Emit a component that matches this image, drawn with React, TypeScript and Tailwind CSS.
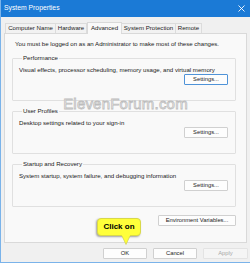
import { ReactNode } from "react";

function Btn({ children, className = "" }: { children: ReactNode; className?: string }) {
    return (
        <button
            type="button"
            className={`flex items-center justify-center h-[11px] border rounded-[1px] text-[5.8px] leading-none ${className}`}
        >
            {children}
        </button>
    );
}

function Group({ title, desc, focused }: { title: string; desc: string; focused?: boolean }) {
    return (
        <fieldset className="h-[47px] border border-[#e0e0e0] rounded-[1px] pl-[6px] pr-[7px] pb-[5px] flex flex-col">
            <legend className="ml-[3px] px-[1px] leading-[8px] text-[6.1px] text-[#1a1a1a]">{title}</legend>
            <p className="mt-[4px] leading-[8px] text-[6.1px] text-[#1a1a1a]">{desc}</p>
            <div className="mt-auto flex justify-end">
                <Btn
                    className={`w-[44px] bg-[#fdfdfd] text-[#1a1a1a] ${
                        focused ? "border-[#4f93d8]" : "border-[#d0d0d0]"
                    }`}
                >
                    Settings...
                </Btn>
            </div>
        </fieldset>
    );
}

const tabs = [
    { label: "Computer Name", w: "w-[51px]" },
    { label: "Hardware", w: "w-[32px]" },
    { label: "Advanced", w: "w-[35px]", active: true },
    { label: "System Protection", w: "w-[55px]" },
    { label: "Remote", w: "w-[27px]" },
];

export default function App() {
    return (
        <div className="relative w-[250px] h-[263px] overflow-hidden bg-[#f0f0f0] border-l border-b border-[#7ab3ea] font-['Liberation_Sans',Arial,sans-serif] text-[#1a1a1a]">
            {/* title bar */}
            <div className="h-[17px] bg-[#1b7ad6] flex items-center justify-between pl-[3px] pr-[5px]">
                <span className="text-white text-[6.8px] leading-none">System Properties</span>
                <svg width="7" height="7" viewBox="0 0 7 7" className="text-white">
                    <path d="M0.5 0.5 L6.5 6.5 M6.5 0.5 L0.5 6.5" stroke="currentColor" strokeWidth="0.9" />
                </svg>
            </div>

            {/* tabs */}
            <div className="flex items-end h-[16px] pl-[4px] relative z-10">
                {tabs.map((t) =>
                    t.active ? (
                        <div
                            key={t.label}
                            className={`${t.w} h-[12px] -mb-[1px] bg-[#f9f9f9] border border-b-0 border-[#d9d9d9] flex items-center justify-center text-[6.1px] leading-none`}
                        >
                            {t.label}
                        </div>
                    ) : (
                        <div
                            key={t.label}
                            className={`${t.w} h-[10px] bg-[#f2f2f2] border border-b-0 border-[#dcdcdc] -ml-px first:ml-0 flex items-center justify-center text-[6.1px] leading-none`}
                        >
                            {t.label}
                        </div>
                    )
                )}
            </div>

            {/* tab panel */}
            <div className="relative ml-[3px] w-[243px] h-[210px] bg-[#f9f9f9] border border-[#d9d9d9] pt-[6px] pl-[7px] pr-[10px]">
                <p className="ml-[3px] leading-[8px] text-[6.1px]">
                    You must be logged on as an Administrator to make most of these changes.
                </p>
                <div className="mt-[6px] flex flex-col gap-[6px]">
                    <Group
                        title="Performance"
                        desc="Visual effects, processor scheduling, memory usage, and virtual memory"
                        focused
                    />
                    <Group title="User Profiles" desc="Desktop settings related to your sign-in" />
                    <Group
                        title="Startup and Recovery"
                        desc="System startup, system failure, and debugging information"
                    />
                </div>
                <div className="mt-[8px] flex justify-end">
                    <Btn className="w-[78px] bg-[#fdfdfd] border-[#d0d0d0]">Environment Variables...</Btn>
                </div>

                {/* watermark */}
                <div className="absolute left-0 right-0 top-[62px] flex justify-center pointer-events-none">
                    <span className="text-[15px] leading-none tracking-[0.2px] text-[#fafafa] [-webkit-text-stroke:0.8px_#bdbdbd]">
                        ElevenForum.com
                    </span>
                </div>
            </div>

            {/* bottom buttons */}
            <div className="flex justify-end gap-[6px] pt-[5px] pr-[2px]">
                <Btn className="w-[44px] bg-[#fdfdfd] border-[#d0d0d0]">OK</Btn>
                <Btn className="w-[44px] bg-[#fdfdfd] border-[#d0d0d0]">Cancel</Btn>
                <Btn className="w-[45px] bg-[#f5f5f5] border-[#e3e3e3] text-[#a8a8a8]">Apply</Btn>
            </div>

            {/* callout */}
            <div className="absolute left-[96px] top-[218px] flex flex-col items-center pointer-events-none">
                <div className="w-[44px] h-[18px] rounded-[4px] bg-[#ffff3a] border border-[#d8d84a] shadow-[-1px_1px_2px_rgba(0,0,0,0.35)] flex items-center justify-center">
                    <span className="text-[8px] font-bold leading-none text-black">Click on</span>
                </div>
                <svg width="10" height="10" viewBox="0 0 10 10" className="-mt-[1px] ml-[14px]">
                    <path d="M0.5 0 L9.5 0 L5 9.5 Z" fill="#ffff3a" stroke="#c8c84a" strokeWidth="0.6" />
                    <rect x="0.8" y="0" width="8.4" height="1.2" fill="#ffff3a" />
                </svg>
            </div>
        </div>
    );
}
